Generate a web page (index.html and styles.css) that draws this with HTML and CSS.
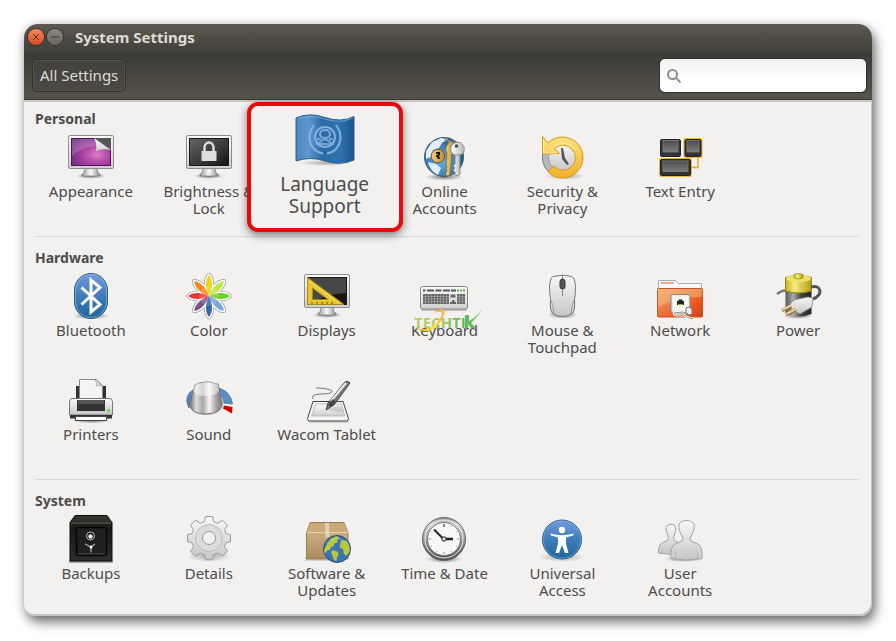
FILE: index.html
```html
<!DOCTYPE html>
<html lang="en">
<head>
<meta charset="utf-8">
<title>System Settings</title>
<link rel="stylesheet" href="styles.css">
</head>
<body>
<svg class="defs" width="0" height="0" aria-hidden="true">
  <defs>
    <linearGradient id="frame" x1="0" y1="0" x2="0" y2="1"><stop offset="0" stop-color="#fafafa"/><stop offset="1" stop-color="#cfcfcd"/></linearGradient>
    <linearGradient id="stand" x1="0" y1="0" x2="1" y2="0"><stop offset="0" stop-color="#999"/><stop offset=".5" stop-color="#fafafa"/><stop offset="1" stop-color="#888"/></linearGradient>
    <radialGradient id="purple" cx=".65" cy=".6" r=".8"><stop offset="0" stop-color="#d880c4"/><stop offset=".4" stop-color="#b046a8"/><stop offset="1" stop-color="#5d2878"/></radialGradient>
    <linearGradient id="dark" x1="0" y1="0" x2="1" y2="1"><stop offset="0" stop-color="#666"/><stop offset="1" stop-color="#161616"/></linearGradient>
    <radialGradient id="shade"><stop offset="0" stop-color="#000" stop-opacity=".5"/><stop offset="1" stop-color="#000" stop-opacity="0"/></radialGradient>
    <linearGradient id="blue" x1="0" y1="0" x2="0" y2="1"><stop offset="0" stop-color="#739bdc"/><stop offset=".5" stop-color="#3e7cb8"/><stop offset="1" stop-color="#1f6698"/></linearGradient>
    <linearGradient id="flag" x1="0" y1="0" x2="1" y2="0"><stop offset="0" stop-color="#4f86c0"/><stop offset=".22" stop-color="#5f97cf"/><stop offset=".45" stop-color="#2b69a5"/><stop offset=".75" stop-color="#2e72ae"/><stop offset="1" stop-color="#1d548c"/></linearGradient>
    <radialGradient id="globe" cx=".45" cy=".6" r=".65"><stop offset="0" stop-color="#69b0e6"/><stop offset=".6" stop-color="#397fb7"/><stop offset="1" stop-color="#15405f"/></radialGradient>
    <linearGradient id="gold" x1="0" y1="0" x2="0" y2="1"><stop offset="0" stop-color="#fde47c"/><stop offset="1" stop-color="#f0b02c"/></linearGradient>
    <linearGradient id="brass" x1="0" y1="0" x2="1" y2="0"><stop offset="0" stop-color="#f1d185"/><stop offset="1" stop-color="#b98c33"/></linearGradient>
    <linearGradient id="silver" x1="0" y1="0" x2="1" y2="0"><stop offset="0" stop-color="#fff"/><stop offset="1" stop-color="#b8b8b8"/></linearGradient>
    <linearGradient id="key" x1="0" y1="0" x2="0" y2="1"><stop offset="0" stop-color="#4b4b4b"/><stop offset="1" stop-color="#7b7b7b"/></linearGradient>
    <linearGradient id="grey" x1="0" y1="0" x2="0" y2="1"><stop offset="0" stop-color="#f8f8f8"/><stop offset="1" stop-color="#c6c6c6"/></linearGradient>
    <linearGradient id="folder" x1="0" y1="0" x2="1" y2="1"><stop offset="0" stop-color="#f0a36b"/><stop offset=".45" stop-color="#ea7a3f"/><stop offset=".7" stop-color="#f05318"/><stop offset="1" stop-color="#cd4218"/></linearGradient>
    <linearGradient id="cell" x1="0" y1="0" x2="1" y2="0"><stop offset="0" stop-color="#555"/><stop offset=".3" stop-color="#aaa"/><stop offset=".6" stop-color="#444"/><stop offset="1" stop-color="#222"/></linearGradient>
    <linearGradient id="yellow" x1="0" y1="0" x2="1" y2="0"><stop offset="0" stop-color="#c9b51f"/><stop offset=".35" stop-color="#f5ec7a"/><stop offset="1" stop-color="#b39c14"/></linearGradient>
    <linearGradient id="knob" x1="0" y1="0" x2="1" y2="0"><stop offset="0" stop-color="#777"/><stop offset=".2" stop-color="#ddd"/><stop offset=".4" stop-color="#a9a4a6"/><stop offset=".6" stop-color="#faf4f8"/><stop offset=".82" stop-color="#a8a0a5"/><stop offset="1" stop-color="#777"/></linearGradient>
    <linearGradient id="safe" x1="0" y1="0" x2="0" y2="1"><stop offset="0" stop-color="#3a3a35"/><stop offset=".3" stop-color="#171817"/><stop offset="1" stop-color="#2c2e2b"/></linearGradient>
    <linearGradient id="box" x1="0" y1="0" x2="0" y2="1"><stop offset="0" stop-color="#d5bb8f"/><stop offset="1" stop-color="#ac8a5c"/></linearGradient>
    <linearGradient id="rim" x1="0" y1="0" x2="0" y2="1"><stop offset="0" stop-color="#888"/><stop offset=".15" stop-color="#d8d8d6"/><stop offset=".6" stop-color="#8b8c89"/><stop offset="1" stop-color="#444"/></linearGradient>
    <linearGradient id="tech" x1="0" y1="0" x2="1" y2="0"><stop offset="0" stop-color="#bdc95e"/><stop offset=".5" stop-color="#a8c84e"/><stop offset="1" stop-color="#4dad4b"/></linearGradient>
    <linearGradient id="swoosh" x1="0" y1="1" x2="1" y2="0"><stop offset="0" stop-color="#e0b500"/><stop offset=".5" stop-color="#ffe52e"/><stop offset="1" stop-color="#f19a30"/></linearGradient>
    <g id="monitor">
      <ellipse cx="24" cy="43" rx="15" ry="3" fill="url(#shade)"/>
      <path d="M18 35h12l1 5q3 1 2 3H15q-1-2 2-3z" fill="url(#stand)" stroke="#777" stroke-width=".7"/>
      <rect x="1.5" y="2.5" width="45" height="33" rx="1.5" fill="url(#frame)" stroke="#8d8d8b"/>
      <rect x="4" y="5" width="40" height="28" fill="#171717"/>
    </g>
    <path id="petal" d="M24 24C19.500 15 20.500 7 24 3c3.500 4 4.500 12 0 21z"/>
    <g id="flower">
      <use href="#petal"/><use href="#petal" transform="rotate(45 24 24)"/><use href="#petal" transform="rotate(90 24 24)"/><use href="#petal" transform="rotate(135 24 24)"/><use href="#petal" transform="rotate(180 24 24)"/><use href="#petal" transform="rotate(225 24 24)"/><use href="#petal" transform="rotate(270 24 24)"/><use href="#petal" transform="rotate(315 24 24)"/>
    </g>
    <g id="land">
      <path d="M-14-8l5-7 8-4 5 3-4 3 1 3-5 2-1 4-4 1-1 4-4 1-4 5-1-6zM-7 2l6 1 4 4-3 5-1 6-4-3-2-7-2-3zM6-13l8 1 4 7 1 8-5 7-4-3-1-7-5-2 1-6z"/>
    </g>
  </defs>
</svg>

<main class="window">
  <header class="titlebar">
    <button class="control close" type="button" aria-label="Close"><svg viewBox="0 0 16 16"><path d="M5 5l6 6M11 5l-6 6"/></svg></button>
    <button class="control minimise" type="button" aria-label="Minimize"><svg viewBox="0 0 16 16"><path d="M4 8h8"/></svg></button>
    <h1>System Settings</h1>
  </header>
  <nav class="toolbar">
    <button class="all" type="button">All Settings</button>
    <label class="search">
      <svg viewBox="0 0 16 16" aria-hidden="true"><circle cx="6.5" cy="6.5" r="4.5"/><path d="M10 10l4.500 4.500"/></svg>
      <input type="search" aria-label="Search settings">
    </label>
  </nav>

  <section class="group">
    <h2>Personal</h2>
    <div class="grid">
      <button class="item" type="button">
        <svg viewBox="0 0 48 48"><use href="#monitor"/><rect x="4.5" y="5.5" width="39" height="27" fill="url(#purple)" stroke="#54115a"/><path d="M27 5h17v12z" fill="#555"/><path d="M27 5q3 6 2 13 6-3 15-1z" fill="url(#frame)"/><path d="M5 6h22l2 7Q14 14 5 23z" fill="#fff" opacity=".18"/></svg>
        <span>Appearance</span>
      </button>
      <button class="item" type="button">
        <svg viewBox="0 0 48 48"><use href="#monitor"/><rect x="5" y="6" width="38" height="26" fill="url(#dark)"/><path d="M19.500 19v-4.500a4.500 5 0 0 1 9 0V19" fill="none" stroke="#ddd" stroke-width="2.5"/><rect x="16.5" y="18" width="15" height="10" fill="#ddd"/></svg>
        <span>Brightness &amp;<br>Lock</span>
      </button>
      <div class="spot">
        <button class="callout" type="button">
          <svg viewBox="0 0 60 54"><ellipse cx="30" cy="49" rx="26" ry="3" fill="url(#shade)" opacity=".6"/><path d="M1 4Q14-2 30 3.500T59 2.500V46Q45 52 30 47T1 47z" fill="url(#flag)" stroke="#285f94"/><path d="M2.500 5Q15 0 30 5t27.500-1" fill="none" stroke="#8fb8df" opacity=".6"/><g fill="none" stroke="#8fbbe0" opacity=".85"><circle cx="30" cy="23" r="10" stroke-width="2"/><ellipse cx="30" cy="20" rx="5" ry="4" stroke-width="2"/><path d="M24 29q6-7 12 0M22 25h4M34 25h4M21 30h18" stroke-width="2" opacity=".8"/><path d="M19 11q-9 13 0 24 4 4 9 4.500M41 11q9 13 0 24-4 4-9 4.500" stroke-width="2"/><path d="M16 15q-4 9 2 18M44 15q4 9-2 18" opacity=".7"/></g></svg>
          <span>Language<br>Support</span>
        </button>
      </div>
      <button class="item" type="button">
        <svg viewBox="0 0 48 48"><ellipse cx="24" cy="44" rx="19" ry="3.5" fill="url(#shade)"/><circle cx="24" cy="24" r="19.5" fill="url(#globe)" stroke="#234a68" stroke-width=".8"/><path d="M6 18l6-9 9-4 7 1-6 4-3 5-6 2-2 7-5 2zM8 29l8 2 5 4-3 7q-8-4-10-13zM28 7l9 4-5 3z" fill="#e4edf5"/><circle cx="18" cy="23" r="6.8" fill="url(#brass)" stroke="#765713"/><path d="M16 19h4v3l-1 1 1 3h-2l-2-3v-1h2v-1h-2z" fill="#1d1608"/><path d="M25 5q6-2 13 7M24 6q5 4 13 4" fill="none" stroke="#789" stroke-width="1.2"/><path d="M28 10q6-4 7 3 0 6-3 8l-2 21-3 1-2-2 2-3-1-2 1-2-1-2 1-12q-3-5 1-9z" fill="url(#brass)" stroke="#86651f" stroke-width=".8"/><circle cx="37.5" cy="16" r="6.8" fill="url(#silver)" stroke="#777" stroke-width=".8"/><path d="M35 22h5v19l-2 2-3-1v-3l-2-1 1-2 1-1-2-2 2-2z" fill="url(#silver)" stroke="#777" stroke-width=".8"/><circle cx="36.5" cy="13" r="1.8" fill="#49545c"/></svg>
        <span>Online<br>Accounts</span>
      </button>
      <button class="item" type="button">
        <svg viewBox="0 0 48 48"><ellipse cx="27" cy="43" rx="20" ry="4" fill="url(#shade)" opacity=".6"/><circle cx="24.5" cy="24.5" r="20" fill="#b9b9b9" stroke="#777"/><circle cx="24.5" cy="24.5" r="14" fill="url(#grey)" stroke="#9c9c9c"/><path d="M25 15l2 10 4 6-2 1-5-6-1-11z" fill="#555"/><path d="M10 39A20.500 20.500 0 1 0 10 10L4.500 3.500V21l17-.5-5-5A12.500 12.500 0 1 1 15.500 33z" fill="url(#gold)" stroke="#d79b22"/><path d="M5.500 6v14h13L13 15q14-10 26 2" fill="none" stroke="#fff6bc" opacity=".7"/></svg>
        <span>Security &amp;<br>Privacy</span>
      </button>
      <button class="item" type="button">
        <svg viewBox="0 0 48 48"><path d="M42 25v9.500h-7" fill="none" stroke="#e3a628" stroke-width="1.5"/><rect x="27.5" y="5" width="19" height="20" rx="2" fill="#f1b338"/><rect x="3" y="25" width="33" height="19" rx="2" fill="#f1b338"/><g fill="#343434" stroke="#222"><rect x="4.5" y="6.5" width="20" height="17" rx="1.5"/><rect x="29" y="6.5" width="16" height="17" rx="1.5"/><rect x="4.5" y="26.5" width="30" height="16" rx="1.5"/></g><g fill="url(#key)" stroke="#858585" stroke-width=".7"><rect x="7" y="7.5" width="15" height="11.5"/><rect x="31" y="7.5" width="12" height="11.5"/><rect x="7" y="28" width="25" height="10.5"/></g></svg>
        <span>Text Entry</span>
      </button>
    </div>
  </section>

  <section class="group">
    <h2>Hardware</h2>
    <div class="grid">
      <button class="item" type="button">
        <svg viewBox="0 0 48 48"><ellipse cx="24" cy="44" rx="18" ry="3.5" fill="url(#shade)"/><rect x="7.5" y="1.5" width="33" height="45" rx="16.5" fill="url(#blue)" stroke="#2b6190"/><rect x="8.5" y="2.5" width="31" height="43" rx="15.5" fill="none" stroke="#9dc0e8" opacity=".55"/><path d="M14.500 15.500L33 32.500l-9 7.500V8l9 7.500-18.500 17" fill="none" stroke="#fff" stroke-width="3"/></svg>
        <span>Bluetooth</span>
      </button>
      <button class="item" type="button">
        <svg viewBox="0 0 48 48"><use href="#flower" fill="#fff" stroke="#999" stroke-width="4.2" stroke-linejoin="round"/><use href="#flower" fill="#fff" stroke="#fff" stroke-width="2.8" stroke-linejoin="round"/><use href="#petal" fill="#f2d312"/><use href="#petal" fill="#b9ea45" transform="rotate(45 24 24)"/><use href="#petal" fill="#70cf20" transform="rotate(90 24 24)"/><use href="#petal" fill="#78a5d8" transform="rotate(135 24 24)"/><use href="#petal" fill="#3966aa" transform="rotate(180 24 24)"/><use href="#petal" fill="#7c5184" transform="rotate(225 24 24)"/><use href="#petal" fill="#ec3434" transform="rotate(270 24 24)"/><use href="#petal" fill="#f9851c" transform="rotate(315 24 24)"/><circle cx="24" cy="24" r="10" fill="#fff" opacity=".16"/></svg>
        <span>Color</span>
      </button>
      <button class="item" type="button">
        <svg viewBox="0 0 48 48"><use href="#monitor"/><path d="M5 6h38v15Q22 22 5 32z" fill="#777" opacity=".5"/><path d="M4.500 5.500L41 32.500H4.500zM9.500 16v11.500H25z" fill="#e6c62c" fill-rule="evenodd" stroke="#a88a12"/><path d="M6 9l30 22" stroke="#fff4a0" opacity=".7"/><path d="M9 32v-2m5 2v-2m5 2v-2m5 2v-2m5 2v-2" stroke="#665407"/></svg>
        <span>Displays</span>
      </button>
      <button class="item branded" type="button">
        <svg viewBox="0 0 48 48"><rect x="1" y="36" width="46" height="3" rx="1.5" fill="#000" opacity=".2"/><rect x=".5" y="14.5" width="47" height="22.5" rx="2" fill="url(#frame)" stroke="#858585"/><path d="M3 18.500h2.500M7 18.500h7M15.500 18.500h6M23 18.500h7M31 18.500h5" stroke="#555" stroke-width="2"/><path d="M37 18.500h2m1 0h2m1 0h2" stroke="#65a944" stroke-width="2"/><g stroke="#666" stroke-width="10"><path d="M3 27h26M37 27h8"/></g><path d="M3 24.500h26M3 27h26M3 29.500h26M37 24.500h8M37 27h8M37 29.500h8M5.500 22v10m3-10v10m3-10v10m3-10v10m3-10v10m3-10v10m3-10v10m3-10v10m13-10v10m3-10v10" stroke="#ccc" stroke-width=".4"/><path d="M30.500 22.500h5v3h-5zM32 28h2.500v2H36v2h-6v-2h2z" fill="#666"/></svg>
        <span>Keyboard</span>
        <svg class="brand" viewBox="0 0 70 28"><text x="0" y="20" fill="url(#tech)">TECHTI</text><path d="M51 7h4v6l5-3L69 1l-9 11-3 3 6 6-6-1-3-4v4h-3z" fill="#58b34e"/><path d="M1 20q14 4 22-6 5-5 6-10 1 8-6 14-10 10-22 2z" fill="url(#swoosh)"/><path d="M19 5q9-6 11-3 2 5-5 12 4-8 2-10-2-1-8 1z" fill="#f5b638"/></svg>
      </button>
      <button class="item" type="button">
        <svg viewBox="0 0 48 48"><ellipse cx="24.5" cy="43" rx="15" ry="4" fill="url(#shade)"/><path d="M15 4.500q9.500-2.500 19 0 3 2 3.500 10 0 7-1 13 1 10-2 14-10 6-20 0-3-4-2-14-1-6-1-13Q12 6.500 15 4.500z" fill="url(#grey)" stroke="#777"/><path d="M13 28q2 4 3 14M36 28q-2 4-3 14" fill="none" stroke="#999"/><path d="M24.500 3v21" stroke="#888"/><rect x="22" y="7" width="5" height="10" rx="2.5" fill="#555" stroke="#333"/></svg>
        <span>Mouse &amp;<br>Touchpad</span>
      </button>
      <button class="item" type="button">
        <svg viewBox="0 0 48 48"><path d="M2.500 17V8.500h17l3 3h23V17z" fill="#f8f8f8" stroke="#aaa"/><path d="M5 11h13" stroke="#f2a987" stroke-width="2"/><rect x="1.5" y="16.5" width="45" height="28.5" rx="1" fill="url(#folder)" stroke="#c9562a"/><path d="M2 17h44v8Q25 24 2 35z" fill="#fbe0b0" opacity=".3"/><rect x="15" y="22.5" width="19" height="18" rx="2" fill="#e9e9e7" stroke="#888"/><rect x="17" y="24.5" width="15" height="14" rx="1" fill="#f6f6f5"/><path d="M21 33v-4h1.500v-1.500h4V29H28v4z" fill="#222"/><path d="M22 32.500h5" stroke="#b4a52a"/><path d="M34 41q-8-2-16 0-1 3 10 2 3 3 9 4" fill="none" stroke="#fff" stroke-width="2.5"/><path d="M34 41q-8-2-16 0-1 3 10 2 3 3 9 4" fill="none" stroke="#888"/><path d="M30 36l3-1 3 2v5l-3 1-3-2z" fill="#eee" stroke="#777"/></svg>
        <span>Network</span>
      </button>
      <button class="item" type="button">
        <svg viewBox="0 0 48 48"><ellipse cx="24" cy="44" rx="15" ry="3" fill="url(#shade)"/><path d="M3 22q6-5 12-3" fill="none" stroke="#777" stroke-width="2.5"/><path d="M11.500 15v27q13 5 26 0V15z" fill="url(#cell)"/><path d="M11.500 5.500q13-4 26 0V19q-13 4-26 0z" fill="url(#yellow)" stroke="#968614"/><ellipse cx="24.5" cy="6.5" rx="12.5" ry="3.5" fill="#eee268"/><path d="M20 2.500q4.500-2 9 0V6q-4.500 2-9 0z" fill="url(#yellow)" stroke="#968614" stroke-width=".7"/><path d="M37 15q8-2 9 4 0 5-7 8" fill="none" stroke="#4f5551" stroke-width="3"/><path d="M39 26l-5-1-14 3-4 4 2 6 8 4 12-7z" fill="url(#grey)" stroke="#888" stroke-width=".8"/><path d="M8 38.500l9-4.500M12 42.500l10-5" stroke="#8f6c3b" stroke-width="3.5"/><path d="M8 38l9-4.500M12 42l10-5" stroke="#f1cc94" stroke-width="2"/></svg>
        <span>Power</span>
      </button>
      <button class="item" type="button">
        <svg viewBox="0 0 48 48"><ellipse cx="24" cy="44.5" rx="20" ry="3" fill="url(#shade)"/><path d="M9 10h30v17H9z" fill="#333"/><path d="M12.500 27V3.500h17l6 6V27z" fill="#f4f4f4" stroke="#888"/><path d="M28 4q3 3 1 6 3-1 6 0z" fill="#ddd" stroke="#999" stroke-width=".6"/><path d="M4 22.500h40l1.500 3V39h-43V25.500z" fill="url(#grey)" stroke="#777"/><path d="M10 24h28v11H10z" fill="#333"/><path d="M11 24h26v4H11z" fill="#555"/><path d="M3 39h42v3.500H3z" fill="#333"/><path d="M8.500 40.500h31v4h-31z" fill="#fff" stroke="#444"/><circle cx="41.5" cy="34.5" r="1.5" fill="#60db35"/></svg>
        <span>Printers</span>
      </button>
      <button class="item" type="button">
        <svg viewBox="0 0 48 48"><path d="M4 32Q-3 19 11 12L6 23z" fill="#5585bd" stroke="#3568a4" stroke-width=".7"/><path d="M34 12q12 4 13.500 16L39 27q0-6-7-10z" fill="#5c8cc4" stroke="#3568a4" stroke-width=".7"/><path d="M39 29.500l8.500 1.500-.5 6.500-9-5z" fill="#d20000"/><ellipse cx="21" cy="28" rx="17.5" ry="11" fill="#777" opacity=".45"/><path d="M10 9q4-3 12-3 6 0 8 2h3l1 5 3 14q-1 11-16.500 11T5 27z" fill="url(#knob)" stroke="#777"/><path d="M10 9q4-3 12-3 6 0 8 2h3l1 6q-2 6-13 6-10 0-13-5z" fill="#fff" opacity=".5"/></svg>
        <span>Sound</span>
      </button>
      <button class="item" type="button">
        <svg viewBox="0 0 48 48"><path d="M6 44h40v3H6z" fill="#000" opacity=".12"/><path d="M10 25.500h30l5.500 17q0 2.500-2 2.500h-37q-2 0-2-2.500z" fill="#f4f4f4" stroke="#444"/><path d="M13 28h25l4 12H8.500z" fill="url(#frame)" stroke="#aaa" stroke-width=".7"/><path d="M13 12q12 0 16 3 1 3-12 3-10 1-7 5" fill="none" stroke="#777"/><path d="M24 34l12-5 5 7z" fill="#000" opacity=".12"/><path d="M23 34l2-7L42 6q3-2 5 1L31 29z" fill="#777" stroke="#444"/><path d="M28 25L43 7" stroke="#eee" stroke-width="2"/><path d="M25 29l5-6 3 3-5 5z" fill="#444"/></svg>
        <span>Wacom Tablet</span>
      </button>
    </div>
  </section>

  <section class="group">
    <h2>System</h2>
    <div class="grid">
      <button class="item" type="button">
        <svg viewBox="0 0 48 48"><path d="M2 45h44v3H2z" fill="#000" opacity=".3"/><path d="M8 .5h32l5 7V46H3V7.500z" fill="url(#safe)" stroke="#0b0b0b"/><path d="M4 8h40" stroke="#5f5b48"/><rect x="9.5" y="12.5" width="30" height="28" rx="2" fill="#20211f" stroke="#050505" stroke-width="1.5"/><path d="M11 39h27" stroke="#4a4c48"/><circle cx="23.5" cy="21" r="4" fill="#111" stroke="#bbb"/><circle cx="23.5" cy="21.5" r="2.2" fill="#eee"/><path d="M18 29l6 3 4-3M24 31.500v6" fill="none" stroke="#aaa" stroke-width="1.3"/><circle cx="24" cy="32" r="1.5" fill="#fff"/></svg>
        <span>Backups</span>
      </button>
      <button class="item" type="button">
        <svg viewBox="0 0 48 48"><ellipse cx="24" cy="41" rx="22" ry="6" fill="url(#shade)" opacity=".6"/><path d="M19.500 6.500l1-5h7l1 5 4 1.700 5-3 5 5-3 4.500 1.500 4 4.500 1v7l-4.500 1-1.500 4 3 4.500-5 5-5-3-4 1.600-1 5h-7l-1-5-4-1.600-5 3-5-5 3-4.500-1.500-4-4.500-1v-7l4.500-1 1.500-4-3-4.500 5-5 5 3z" fill="url(#grey)" stroke="#999"/><circle cx="24" cy="23" r="13.5" fill="#dcdcdc" stroke="#bdbdbd"/><circle cx="24" cy="23" r="6.5" fill="#f2f1f0" stroke="#999"/></svg>
        <span>Details</span>
      </button>
      <button class="item" type="button">
        <svg viewBox="0 0 48 48"><path d="M2 42h40v4H2z" fill="#000" opacity=".12"/><path d="M7 7.500h34l4 10V44H3.500V17.500z" fill="url(#box)" stroke="#9b7d52"/><path d="M7 8h34l4 9H3.500z" fill="#c8aa7b"/><path d="M4 17.500h41" stroke="#e7d4b1"/><path d="M22 8h4l.5 14h-4z" fill="#e8dcc4" opacity=".8"/><circle cx="34" cy="34" r="13.5" fill="#3e73b6" stroke="#254f80"/><g transform="translate(34 34) scale(.68)" fill="#b8cb36"><use href="#land"/></g><path d="M23 29q10-11 22 0" fill="none" stroke="#b4d4f2" opacity=".4"/></svg>
        <span>Software &amp;<br>Updates</span>
      </button>
      <button class="item" type="button">
        <svg viewBox="0 0 48 48"><ellipse cx="24" cy="44" rx="18" ry="4" fill="url(#shade)"/><circle cx="24" cy="24" r="21.5" fill="url(#rim)" stroke="#666"/><circle cx="24" cy="24" r="19" fill="none" stroke="#eee"/><circle cx="24" cy="24" r="16.5" fill="#f7f7f6" stroke="#777"/><g stroke="#888"><path d="M23.500 9v3M24.500 9v3M24 37v2M9 24h2M37 24h2"/><path d="M31.500 11l-.5 1M37 16.500l-1 .5M37 31.500l-1-.5M31.500 37l-.5-1M16.500 37l.5-1M11 31.500l1-.5M11 16.500l1 .5" stroke="#aaa"/></g><path d="M14 14.500l9 9" stroke="#222" stroke-width="2"/><path d="M25 24h8" stroke="#222" stroke-width="2.5"/><circle cx="24" cy="24" r="2.2" fill="#ddd" stroke="#222"/></svg>
        <span>Time &amp; Date</span>
      </button>
      <button class="item" type="button">
        <svg viewBox="0 0 48 48"><ellipse cx="24" cy="42" rx="23" ry="5" fill="url(#shade)" opacity=".6"/><circle cx="24" cy="24.5" r="19.5" fill="url(#blue)" stroke="#2a618f"/><circle cx="24" cy="24.5" r="18.5" fill="none" stroke="#8fb6e1" opacity=".5"/><circle cx="24" cy="15" r="3.2" fill="#fff"/><path d="M12.500 18.500Q24 22 35.500 18.500v1.700L28 22.500v6L30.500 38H27l-3-8-3 8h-3.500L20 28.500v-6l-7.500-2.300z" fill="#fff"/></svg>
        <span>Universal<br>Access</span>
      </button>
      <button class="item" type="button">
        <svg viewBox="0 0 48 48"><ellipse cx="28" cy="44" rx="19" ry="3" fill="url(#shade)"/><g fill="url(#grey)" stroke="#a3a3a3"><path d="M2.500 38q-.5-8 4-10.500l5-2 1-3q-6-13 2.500-13.500 8 .5 2.500 13.500l1 3 6 3V39q-12 1-22-1z"/><path d="M15 43.500q-1-12 4-14.500l7-3 1-3Q17 6 30.500 5.500 44 6 34 23l1 3 7 3q5 3 4 14.500-15 3-31 0z"/></g><path d="M19.500 36v8M41.500 36v8M6 33v5" stroke="#b5b5b5"/></svg>
        <span>User<br>Accounts</span>
      </button>
    </div>
  </section>
</main>
</body>
</html>
```
FILE: styles.css
```css
* {
  box-sizing: border-box;
}

body {
  margin: 0;
  padding: 24px;
  background: #fff;
  color: #4c4c4c;
  font-family: "Noto Sans", "Open Sans", sans-serif;
  font-size: 15px;
  line-height: 17px;
}

button,
input {
  font: inherit;
  color: inherit;
}

button {
  margin: 0;
  padding: 0;
  border: 0;
  background: none;
}

.defs {
  position: absolute;
}

.window {
  background: #f2f1f0;
  border-radius: 14px 14px 12px 12px;
  box-shadow: inset -1px -2px 0 #c8c6c4, 3px 6px 12px rgba(0, 0, 0, .55), 0 0 12px rgba(0, 0, 0, .12);
}

.titlebar {
  display: flex;
  align-items: center;
  gap: 3px;
  height: 28px;
  padding: 0 0 2px 4px;
  border-radius: 14px 14px 0 0;
  background: linear-gradient(#5d594f, #403f3a);
}

.titlebar h1 {
  margin: 0 0 0 9px;
  color: #dfdbd2;
  font-size: 15px;
  font-weight: 700;
}

.control {
  width: 16px;
  height: 16px;
  border-radius: 50%;
  box-shadow: 0 0 0 1px #33322e;
}

.control svg {
  display: block;
  fill: none;
  stroke: #403b35;
  stroke-width: 1;
}

.close {
  background: linear-gradient(#f6875f, #dc4b1c);
}

.minimise {
  background: linear-gradient(#8b887f, #66635b);
}

.toolbar {
  display: flex;
  justify-content: space-between;
  padding: 7px 6px 7px 8px;
  background: linear-gradient(#3b3a36, #56534b);
  border-bottom: 1px solid #3a3935;
  box-shadow: 0 2px 0 #cbc7c4;
}

.all {
  height: 33px;
  padding: 0 7px;
  border: 1px solid #33322e;
  border-radius: 5px;
  background: linear-gradient(#42413c, #4b4943);
  box-shadow: inset 0 0 0 1px #55534c;
  color: #dfdbd2;
}

.search {
  display: flex;
  align-items: center;
  gap: 8px;
  width: 206px;
  padding: 0 6px;
  border-radius: 5px;
  background: linear-gradient(#f1f1f1, #fff 60%);
  box-shadow: 0 0 0 1px #302f2b;
}

.search svg {
  flex: none;
  width: 16px;
  height: 16px;
  fill: none;
  stroke: #8f8e89;
  stroke-width: 2;
}

.search input {
  flex: 1;
  min-width: 0;
  border: 0;
  outline: 0;
  background: none;
}

.group {
  padding: 9px 13px 19px 8px;
}

.group:last-child {
  padding-bottom: 17px;
}

.group + .group {
  padding-top: 0;
}

.group h2 {
  margin: 0 0 4px 3px;
  font-size: 14px;
  font-weight: 700;
  line-height: 20px;
}

.group + .group h2 {
  padding-top: 11px;
  border-top: 1px solid #dad8d5;
}

.grid {
  display: grid;
  grid-template-columns: repeat(7, minmax(0, 1fr));
  row-gap: 20px;
  margin-right: 2px;
}

.item,
.callout {
  display: flex;
  flex-direction: column;
  align-items: center;
  text-align: center;
}

.item {
  gap: 2px;
  min-height: 84px;
}

.item > svg:first-child {
  flex: none;
  width: 48px;
  height: 48px;
}

.item span {
  white-space: nowrap;
}

.spot,
.branded {
  position: relative;
}

.callout {
  position: absolute;
  inset: -31px -17px -15px -21px;
  z-index: 1;
  padding-top: 8px;
  gap: 5px;
  border: 4px solid #e8090c;
  border-radius: 11px;
  background: #f2f1f0;
  box-shadow: 0 3px 9px rgba(0, 0, 0, .5);
  font-size: 19px;
  line-height: 22px;
}

.callout svg {
  width: 60px;
  height: 54px;
}

.brand {
  position: absolute;
  top: 36px;
  left: 28px;
  width: 70px;
  height: 28px;
  opacity: .9;
}

.brand text {
  font: 700 15px "Open Sans", sans-serif;
}
```
